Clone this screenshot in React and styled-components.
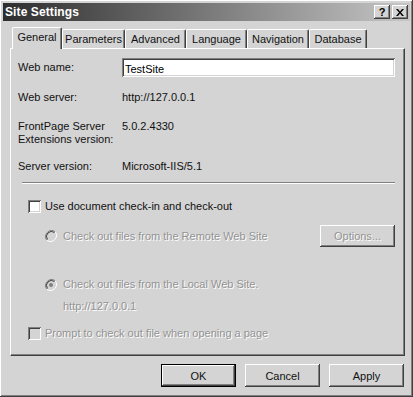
import React from "react";
import styled, { createGlobalStyle, css } from "styled-components";

const GlobalStyle = createGlobalStyle`
  html, body {
    margin: 0;
    padding: 0;
    background: #d4d4d4;
  }
  * {
    box-sizing: border-box;
  }
`;

const FACE = "#d4d4d4";
const SHADOW = "#808080";
const DARK = "#404040";

const raised = css`
  box-shadow: inset -1px -1px ${DARK}, inset 1px 1px #fff,
    inset -2px -2px ${SHADOW}, inset 2px 2px ${FACE};
`;

const sunken = css`
  box-shadow: inset 1px 1px ${SHADOW}, inset -1px -1px #fff,
    inset 2px 2px ${DARK}, inset -2px -2px ${FACE};
`;

const SiteSettings = () => {
  return (
    <Window>
      <GlobalStyle />
      <TitleBar>
        <Title>Site Settings</Title>
        <TitleButtons>
          <TitleButton>?</TitleButton>
          <TitleButton>
            <svg width="8" height="7" viewBox="0 0 8 7">
              <path d="M0 0h2l2 2.5L6 0h2L5 3.5 8 7H6L4 4.5 2 7H0l3-3.5z" fill="#000" />
            </svg>
          </TitleButton>
        </TitleButtons>
      </TitleBar>

      <Body>
        {/* Tabs */}
        <TabRow>
          <Tab $active $w={50}>General</Tab>
          <Tab $w={63}>Parameters</Tab>
          <Tab $w={61}>Advanced</Tab>
          <Tab $w={61}>Language</Tab>
          <Tab $w={62}>Navigation</Tab>
          <Tab $w={58}>Database</Tab>
        </TabRow>

        <Panel>
          <InfoRow $mt={0} $center>
            <Label>Web name:</Label>
            <TextBox defaultValue="TestSite" />
          </InfoRow>
          <InfoRow $mt={14}>
            <Label>Web server:</Label>
            <Value>http://127.0.0.1</Value>
          </InfoRow>
          <InfoRow $mt={16}>
            <Label>
              FrontPage Server
              <br />
              Extensions version:
            </Label>
            <Value>5.0.2.4330</Value>
          </InfoRow>
          <InfoRow $mt={14}>
            <Label>Server version:</Label>
            <Value>Microsoft-IIS/5.1</Value>
          </InfoRow>

          <Separator />

          <CheckRow $mt={16}>
            <CheckBox />
            <span>Use document check-in and check-out</span>
          </CheckRow>

          <RadioRow $mt={12}>
            <RadioLabel>
              <Radio />
              <Disabled>Check out files from the Remote Web Site</Disabled>
            </RadioLabel>
            <Button $disabled>Options...</Button>
          </RadioRow>

          <RadioRow $mt={31}>
            <RadioLabel>
              <Radio checked />
              <Disabled>Check out files from the Local Web Site.</Disabled>
            </RadioLabel>
          </RadioRow>

          <UrlLine>
            <Disabled>http://127.0.0.1</Disabled>
          </UrlLine>

          <CheckRow $mt={14}>
            <CheckBox $disabled />
            <Disabled>Prompt to check out file when opening a page</Disabled>
          </CheckRow>
        </Panel>

        <ButtonRow>
          <Button $default>OK</Button>
          <Button>Cancel</Button>
          <Button>Apply</Button>
        </ButtonRow>
      </Body>
    </Window>
  );
};

const Radio = ({ checked }) => (
  <RadioIcon width="12" height="12" viewBox="0 0 12 12">
    <path d="M10.2 1.8A6 6 0 0 0 1.8 10.2" stroke={SHADOW} strokeWidth="1" fill="none" />
    <circle cx="6" cy="6" r="4.6" fill={FACE} />
    <path d="M9.5 2.5A5 5 0 0 0 2.5 9.5" stroke={DARK} strokeWidth="1" fill="none" />
    <path d="M1.8 10.2A6 6 0 0 0 10.2 1.8" stroke="#fff" strokeWidth="1" fill="none" />
    {checked && <circle cx="6" cy="6" r="2" fill={SHADOW} />}
  </RadioIcon>
);

// Styled Components

const Window = styled.div`
  width: 413px;
  height: 397px;
  padding: 3px;
  background: ${FACE};
  font-family: "Liberation Sans", Arial, sans-serif;
  font-size: 11px;
  color: #111;
  display: flex;
  flex-direction: column;
  ${raised};
`;

const TitleBar = styled.div`
  height: 18px;
  display: flex;
  align-items: center;
  justify-content: space-between;
  padding: 0 2px 0 2px;
  background: linear-gradient(to right, #2e2e2e 0%, #6a6a6a 40%, #c6c6c6 100%);
`;

const Title = styled.div`
  color: #fff;
  font-weight: bold;
  font-size: 12px;
  letter-spacing: 0.1px;
`;

const TitleButtons = styled.div`
  display: flex;
  gap: 2px;
`;

const TitleButton = styled.div`
  width: 16px;
  height: 14px;
  background: ${FACE};
  display: flex;
  align-items: center;
  justify-content: center;
  font-weight: bold;
  font-size: 11px;
  color: #000;
  ${raised};
`;

const Body = styled.div`
  flex: 1;
  display: flex;
  flex-direction: column;
  padding: 6px 5px 0 7px;
`;

const TabRow = styled.div`
  display: flex;
  align-items: flex-end;
  height: 21px;
  padding-left: 2px;
`;

const Tab = styled.div`
  width: ${(p) => p.$w}px;
  height: ${(p) => (p.$active ? 22 : 19)}px;
  margin-bottom: ${(p) => (p.$active ? -1 : 0)}px;
  padding-top: 3px;
  text-align: center;
  background: ${FACE};
  border-top: 1px solid #fff;
  border-left: 1px solid #fff;
  border-right: 1px solid ${DARK};
  border-radius: 2px 2px 0 0;
  box-shadow: inset -1px 0 ${SHADOW};
  position: relative;
  z-index: ${(p) => (p.$active ? 1 : 0)};
  white-space: nowrap;
`;

const Panel = styled.div`
  height: 308px;
  padding: 9px 9px 0 7px;
  border-top: 1px solid #fff;
  border-left: 1px solid #fff;
  border-right: 1px solid ${DARK};
  border-bottom: 1px solid ${DARK};
  box-shadow: inset -1px -1px ${SHADOW};
  display: flex;
  flex-direction: column;
`;

const InfoRow = styled.div`
  display: grid;
  grid-template-columns: 104px 1fr;
  align-items: ${(p) => (p.$center ? "center" : "start")};
  margin-top: ${(p) => p.$mt}px;
  line-height: 13px;
`;

const Label = styled.div``;

const Value = styled.div``;

const TextBox = styled.input`
  height: 19px;
  width: 273px;
  border: none;
  outline: none;
  background: #fff;
  padding: 2px 3px 0 3px;
  font-family: "Liberation Sans", Arial, sans-serif;
  font-size: 11px;
  color: #000;
  ${sunken};
`;

const Separator = styled.div`
  margin: 9px 0 0 4px;
  height: 2px;
  border-top: 1px solid ${SHADOW};
  border-bottom: 1px solid #fff;
`;

const CheckRow = styled.div`
  display: flex;
  align-items: center;
  gap: 4px;
  margin-top: ${(p) => p.$mt}px;
  margin-left: 10px;
  line-height: 13px;
`;

const CheckBox = styled.div`
  width: 13px;
  height: 13px;
  flex-shrink: 0;
  background: ${(p) => (p.$disabled ? FACE : "#fff")};
  ${sunken};
`;

const RadioRow = styled.div`
  display: flex;
  align-items: center;
  justify-content: space-between;
  margin-top: ${(p) => p.$mt}px;
  margin-left: 27px;
  line-height: 13px;
`;

const RadioLabel = styled.div`
  display: flex;
  align-items: center;
  gap: 6px;
`;

const RadioIcon = styled.svg`
  display: block;
  flex-shrink: 0;
`;

const Disabled = styled.span`
  color: #939393;
  text-shadow: 1px 1px #fff;
`;

const UrlLine = styled.div`
  margin: 9px 0 0 45px;
  line-height: 13px;
`;

const Button = styled.div`
  width: 75px;
  height: ${(p) => (p.$disabled ? 22 : 23)}px;
  display: flex;
  align-items: center;
  justify-content: center;
  background: ${FACE};
  color: ${(p) => (p.$disabled ? "#939393" : "#111")};
  text-shadow: ${(p) => (p.$disabled ? "1px 1px #fff" : "none")};
  ${raised};
  ${(p) =>
    p.$default &&
    css`
      box-shadow: inset 0 0 0 1px #000, inset -2px -2px ${DARK}, inset 2px 2px #fff,
        inset -3px -3px ${SHADOW};
    `}
`;

const ButtonRow = styled.div`
  display: flex;
  justify-content: flex-end;
  gap: 9px;
  margin: 8px 1px 0 0;
`;

export default SiteSettings;
